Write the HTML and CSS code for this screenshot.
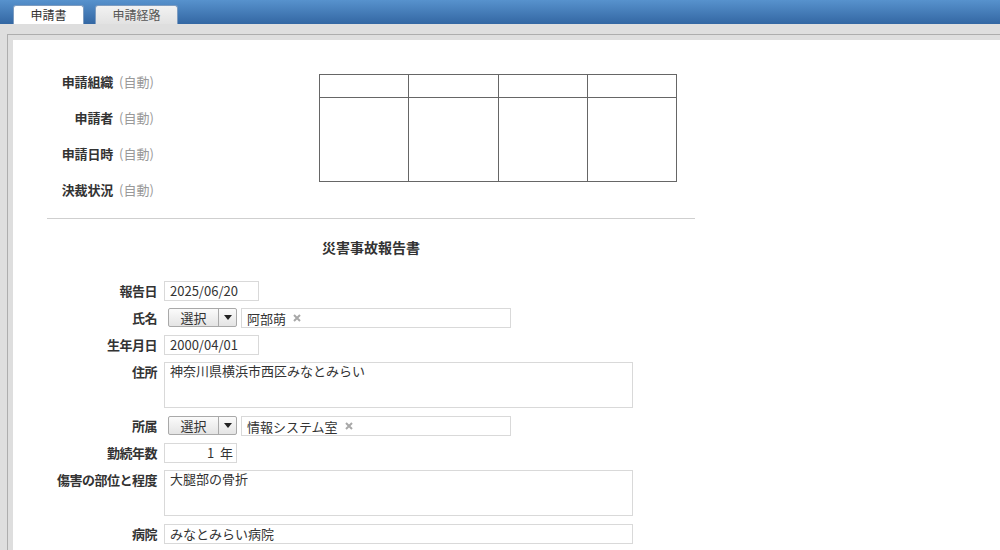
FILE: index.html
```html
<!DOCTYPE html>
<html lang="ja">
<head>
<meta charset="utf-8">
<title>申請書</title>
<link rel="stylesheet" href="styles.css">
</head>
<body>
<div class="topbar">
  <div class="tab active">申請書</div>
  <div class="tab">申請経路</div>
</div>
<div class="frame">
  <div class="panel">
    <div class="content">
      <div class="header">
        <div class="meta">
          <div class="mlabel">申請組織</div><div class="auto">(自動)</div>
          <div class="mlabel">申請者</div><div class="auto">(自動)</div>
          <div class="mlabel">申請日時</div><div class="auto">(自動)</div>
          <div class="mlabel">決裁状況</div><div class="auto">(自動)</div>
        </div>
        <table class="stamp">
          <tr class="thead"><td></td><td></td><td></td><td></td></tr>
          <tr class="tbody"><td></td><td></td><td></td><td></td></tr>
        </table>
      </div>
      <div class="rule"></div>
      <div class="title">災害事故報告書</div>
      <div class="form">
        <div class="row">
          <div class="label">報告日</div>
          <div class="field date">2025/06/20</div>
        </div>
        <div class="row">
          <div class="label">氏名</div>
          <div class="select">
            <div class="sbtn">選択</div>
            <div class="sarrow"><svg width="8" height="5" viewBox="0 0 8 5"><path d="M0 0H8L4 5Z" fill="#222"/></svg></div>
          </div>
          <div class="field chosen">阿部萌<svg class="x" width="8" height="8" viewBox="0 0 8 8"><path d="M1 1L7 7M7 1L1 7" stroke="#a8a8a8" stroke-width="2"/></svg></div>
        </div>
        <div class="row">
          <div class="label">生年月日</div>
          <div class="field date">2000/04/01</div>
        </div>
        <div class="row tall">
          <div class="label">住所</div>
          <div class="field area">神奈川県横浜市西区みなとみらい</div>
        </div>
        <div class="row">
          <div class="label">所属</div>
          <div class="select">
            <div class="sbtn">選択</div>
            <div class="sarrow"><svg width="8" height="5" viewBox="0 0 8 5"><path d="M0 0H8L4 5Z" fill="#222"/></svg></div>
          </div>
          <div class="field chosen">情報システム室<svg class="x" width="8" height="8" viewBox="0 0 8 8"><path d="M1 1L7 7M7 1L1 7" stroke="#a8a8a8" stroke-width="2"/></svg></div>
        </div>
        <div class="row">
          <div class="label">勤続年数</div>
          <div class="field years">1&nbsp;&nbsp;年</div>
        </div>
        <div class="row tall">
          <div class="label">傷害の部位と程度</div>
          <div class="field area">大腿部の骨折</div>
        </div>
        <div class="row">
          <div class="label">病院</div>
          <div class="field wide">みなとみらい病院</div>
        </div>
      </div>
    </div>
  </div>
</div>
</body>
</html>
```
FILE: styles.css
```css
* { box-sizing: border-box; }
html, body { margin: 0; padding: 0; }
body {
  font-family: "Noto Sans CJK JP", "Noto Sans", sans-serif;
  font-size: 13px;
  color: #333;
  background: #dedede;
  overflow: hidden;
}
.topbar {
  height: 24px;
  background: linear-gradient(#5792cd, #3367a3);
  display: flex;
  align-items: flex-end;
  padding-left: 13px;
  gap: 11px;
}
.tab {
  height: 19px;
  width: 83px;
  border-radius: 3px 3px 0 0;
  background: linear-gradient(#f2f2f2, #e2e2e2);
  border: 1px solid #7d9cc0;
  border-bottom: none;
  font-size: 12px;
  line-height: 18px;
  text-align: center;
  color: #555;
}
.tab.active {
  width: 71px;
  background: #fff;
  color: #333;
}
.frame {
  padding: 10px 0 0 7px;
}
.panel {
  border-top: 1px solid #adadad;
  border-left: 1px solid #adadad;
  padding: 5px 0 0 5px;
  background: #dedede;
}
.content {
  background: #fff;
  height: 520px;
  padding: 24px 0 0 34px;
}
.header {
  display: flex;
  align-items: flex-start;
  width: 648px;
}
.meta {
  display: grid;
  grid-template-columns: 66px auto;
  column-gap: 6px;
  grid-auto-rows: 36px;
  line-height: 36px;
  width: 272px;
}
.mlabel { text-align: right; font-weight: bold; letter-spacing: -0.2px; }
.auto { color: #999; }
.stamp {
  margin-top: 10px;
  border-collapse: collapse;
  width: 358px;
}
.stamp td {
  border: 1px solid #666;
  padding: 0;
  width: 25%;
}
.thead td { height: 23px; }
.tbody td { height: 84px; }
.rule {
  width: 648px;
  height: 1px;
  background: #cfcfcf;
  margin-top: 10px;
}
.title {
  width: 648px;
  text-align: center;
  font-size: 14px;
  font-weight: bold;
  line-height: 20px;
  margin-top: 18px;
}
.form { margin-top: 24px; }
.row {
  display: flex;
  align-items: flex-start;
  margin-bottom: 7px;
}
.row.tall { margin-bottom: 8px; }
.label {
  width: 110px;
  text-align: right;
  font-weight: bold;
  line-height: 19px;
  margin-right: 7px;
  white-space: nowrap;
  letter-spacing: -0.5px;
}
.field {
  height: 20px;
  border: 1px solid #d9d9d9;
  line-height: 17px;
  padding: 0 5px;
  white-space: nowrap;
  background: #fff;
}
.date { width: 95px; }
.years { width: 73px; text-align: right; padding-right: 3px; }
.wide { width: 469px; }
.area {
  width: 469px;
  height: 46px;
  line-height: 15px;
  padding-top: 0;
}
.select {
  display: flex;
  margin-left: 4px;
  height: 19px;
  border: 1px solid #a9a9a9;
  border-radius: 2px;
  background: linear-gradient(#fbfbfb, #e4e4e4);
  margin-right: 4px;
}
.sbtn {
  width: 50px;
  text-align: center;
  line-height: 17px;
  border-right: 1px solid #a9a9a9;
}
.sarrow {
  width: 17px;
  display: flex;
  align-items: center;
  justify-content: center;
}
.chosen {
  width: 270px;
  display: flex;
  align-items: center;
  padding-left: 5px;
}
.x { margin-left: 7px; }
```
